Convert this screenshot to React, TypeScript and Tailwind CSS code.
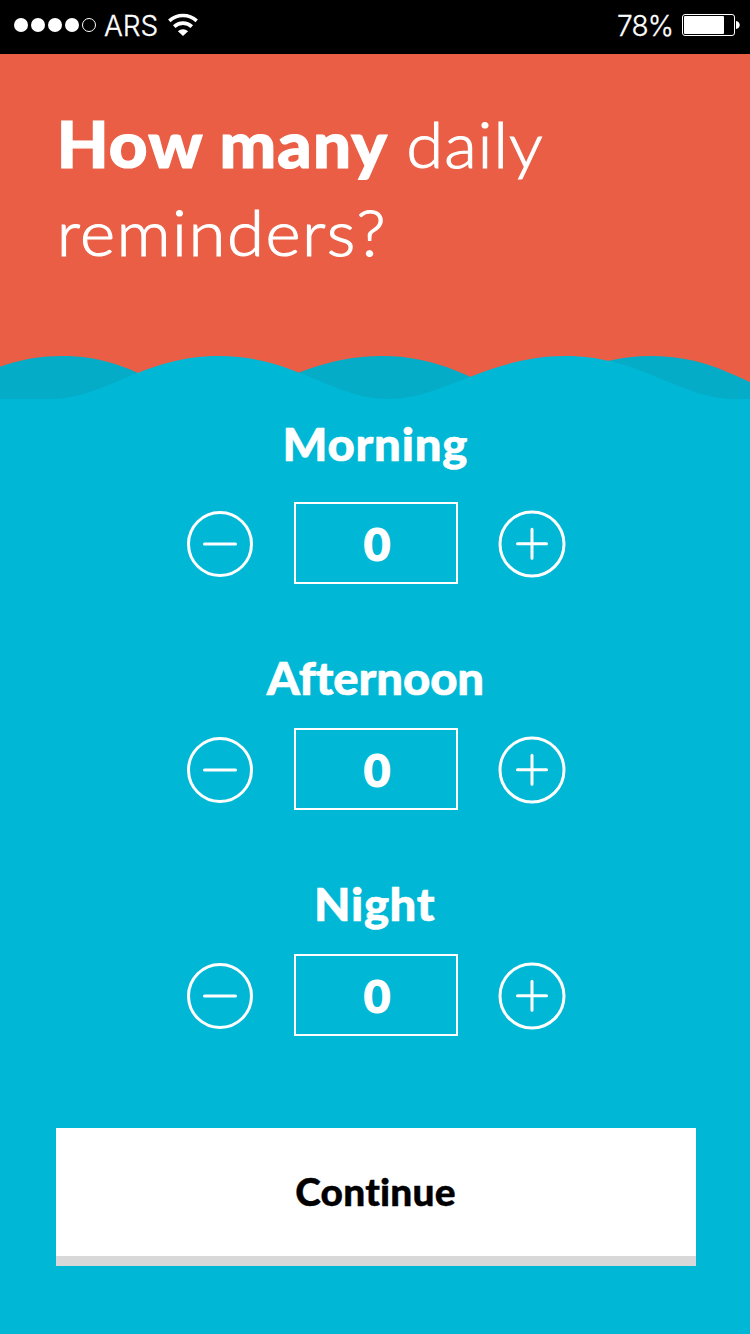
import { useState } from "react";

function StatusBar() {
  return (
    <div className="flex h-[54px] items-start justify-between bg-black pr-[10px] pl-[14px] font-['Inter',sans-serif] text-[28px] leading-[50px] font-[340] text-white">
      <div className="flex h-[50px] items-center">
        <svg width="84" height="16" viewBox="0 0 84 16" fill="#fff">
          <circle cx="7" cy="8" r="7" />
          <circle cx="24" cy="8" r="7" />
          <circle cx="41" cy="8" r="7" />
          <circle cx="58" cy="8" r="7" />
          <circle cx="75" cy="8" r="6.5" fill="none" stroke="#fff" strokeWidth="1" />
        </svg>
        <span className="mt-[2px] ml-[6px] w-[62px] tracking-[-0.1px] [-webkit-text-stroke:0.3px_white]">ARS</span>
        <svg className="ml-[2px]" width="30" height="24" viewBox="0 0 30 24" fill="none" stroke="#fff">
          <path d="M1.3 7.8a20.5 20.5 0 0 1 27.4 0" strokeWidth="3.6" />
          <path d="M6.2 13.6a13 13 0 0 1 17.6 0" strokeWidth="3.6" />
          <path d="M15 23 9.9 18.2a7.6 7.6 0 0 1 10.2 0z" fill="#fff" stroke="none" />
        </svg>
      </div>
      <div className="flex h-[50px] items-center">
        <span className="mt-[2px] mr-[9px] tracking-[-0.9px] [-webkit-text-stroke:0.3px_white]">78%</span>
        <svg width="58" height="22" viewBox="0 0 58 22">
          <rect x="0.5" y="0.5" width="52" height="21" rx="2.5" fill="none" stroke="#fff" />
          <rect x="2" y="2" width="40" height="18" rx="1" fill="#fff" />
          <path d="M54 7c5 1 5 7 0 8z" fill="#fff" />
        </svg>
      </div>
    </div>
  );
}

function Waves() {
  return (
    <svg className="block" width="750" height="44" viewBox="0 0 750 44">
      <g fill="#05acc7">
        <path d="M-98 43C-43 43-14 0 62 0S163 43 218 43z" />
        <path d="M208 43C263 43 304 0 382 0S490 43 545 43z" />
        <path d="M482 43C537 43 576 0 652 0S757 43 812 43z" />
      </g>
      <path
        d="M0 44V43H50C105 43 143 0 219 0S333 43 388 43C443 43 489 0 565 0S680 43 735 43H750V44z"
        fill="#00b8d6"
      />
    </svg>
  );
}

function Stepper({ label, labelClass }: { label: string; labelClass: string }) {
  const [count, setCount] = useState(0);
  return (
    <section className="flex h-[226px] flex-col items-center">
      <h2
        className={`h-[102px] scale-x-105 text-[45px] font-black whitespace-nowrap [-webkit-text-stroke:0.6px_white] ${labelClass}`}
      >
        {label}
      </h2>
      <div className="flex h-[82px] items-center pl-[2px]">
        <button className="block" aria-label="Decrease" onClick={() => setCount(Math.max(0, count - 1))}>
          <svg width="68" height="68" viewBox="0 0 68 68" fill="none" stroke="#fff" strokeWidth="3" strokeLinecap="round">
            <circle cx="34" cy="35" r="31.5" />
            <path d="M18.5 35h31" />
          </svg>
        </button>
        <div className="mx-10 flex h-[82px] w-[164px] items-center justify-center border-2 border-white pt-[2px] pl-[2px] text-[46px] leading-[78px] font-black [-webkit-text-stroke:1.2px_white]">
          {count}
        </div>
        <button className="block" aria-label="Increase" onClick={() => setCount(count + 1)}>
          <svg width="68" height="69" viewBox="0 0 68 69" fill="none" stroke="#fff" strokeWidth="3" strokeLinecap="round">
            <circle cx="34" cy="35" r="32" />
            <path d="M19.5 34.8h29M34 20.3v29" />
          </svg>
        </button>
      </div>
    </section>
  );
}

export default function App() {
  return (
    <main className="h-[1334px] w-[750px] overflow-hidden bg-[#00b8d6] font-['Lato',sans-serif] text-white">
      <StatusBar />
      <header className="bg-[#e95e45]">
        <h1 className="h-[302px] origin-left scale-x-105 pt-[46px] pl-[54px] text-[64px] leading-[88px] font-light whitespace-nowrap">
          <span className="font-black tracking-[1.1px] [-webkit-text-stroke:1.2px_white]">How many</span>{" "}
          <span className="tracking-[0.8px] [-webkit-text-stroke:1.1px_white]">daily</span>
          <br />
          <span className="tracking-[1.4px] [-webkit-text-stroke:1.1px_white]">reminders?</span>
        </h1>
        <Waves />
      </header>
      <Stepper label="Morning" labelClass="tracking-[0.7px] leading-[89px]" />
      <Stepper label="Afternoon" labelClass="tracking-[-0.1px] leading-[104px]" />
      <Stepper label="Night" labelClass="tracking-[0.6px] leading-[104px]" />
      <button className="mt-[50px] ml-14 block h-[138px] w-[640px] border-b-[10px] border-[#d8d8d8] bg-white text-[37px] leading-[128px] font-black tracking-[0.2px] text-black [-webkit-text-stroke:0.4px_black]">
        <span className="inline-block scale-x-105">Continue</span>
      </button>
    </main>
  );
}
